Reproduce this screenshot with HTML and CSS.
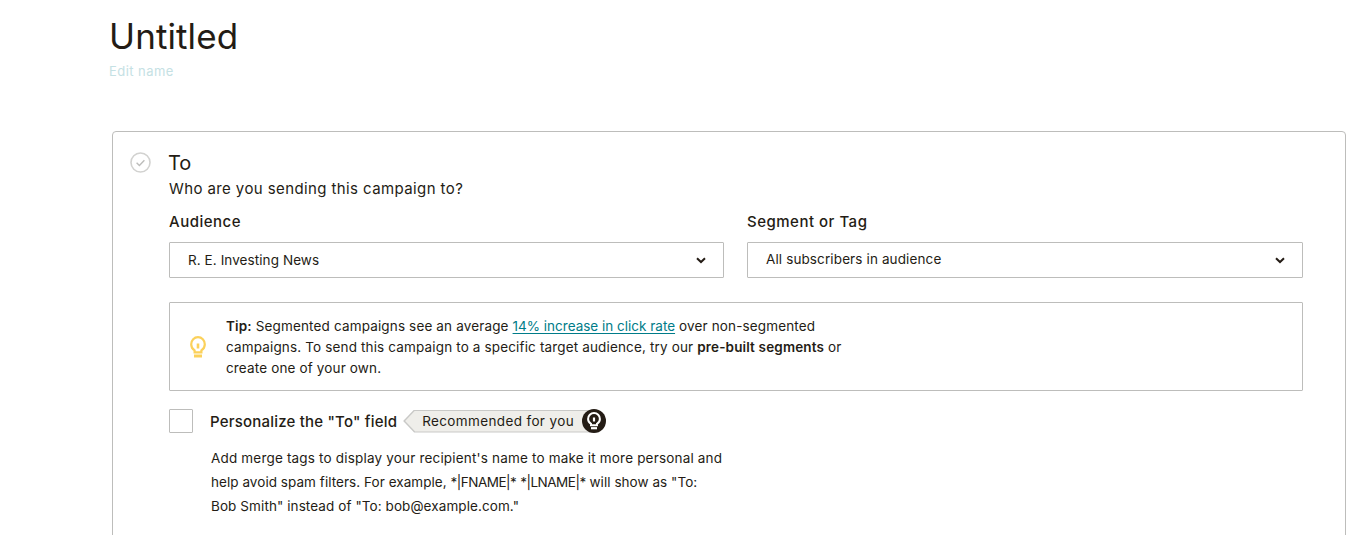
FILE: index.html
```html
<!DOCTYPE html>
<html lang="en">
<head>
<meta charset="utf-8">
<title>Untitled</title>
<link rel="stylesheet" href="styles.css">
</head>
<body>
<main class="page">
  <header class="head">
    <h1 class="title">Untitled</h1>
    <a class="edit">Edit name</a>
  </header>
  <section class="card">
    <svg class="status" width="21" height="21" viewBox="0 0 21 21" fill="none">
      <circle cx="10.5" cy="10.5" r="9.5" stroke="#d2d2d0" stroke-width="1.6"/>
      <path d="M6.6 10.8l2.8 2.8 5-5.4" stroke="#bdbdbb" stroke-width="1.4"/>
    </svg>
    <div class="body">
      <h2 class="heading">To</h2>
      <p class="sub">Who are you sending this campaign to?</p>
      <div class="fields">
        <div class="field field-first">
          <label class="label">Audience</label>
          <div class="select">
            <span class="value">R. E. Investing News</span>
            <svg class="chev" width="10" height="7" viewBox="0 0 10 7" fill="none"><path d="M1 1.2l4 3.8 4-3.8" stroke="#241c15" stroke-width="2"/></svg>
          </div>
        </div>
        <div class="field">
          <label class="label">Segment or Tag</label>
          <div class="select select-alt">
            <span class="value">All subscribers in audience</span>
            <svg class="chev" width="10" height="7" viewBox="0 0 10 7" fill="none"><path d="M1 1.2l4 3.8 4-3.8" stroke="#241c15" stroke-width="2"/></svg>
          </div>
        </div>
      </div>
      <div class="tip">
        <svg class="bulb" width="16" height="22" viewBox="0 0 16 22" fill="none">
          <path d="M4.6 14.4C2.5 13.1 1.2 11 1.2 8.2 1.2 4.4 4.2 1.2 8 1.2s6.8 3.2 6.8 7c0 2.8-1.3 4.9-3.4 6.2v2H4.6z" stroke="#fbd15b" stroke-width="2.2"/>
          <path d="M8 7.5v5" stroke="#fbd15b" stroke-width="2.6"/>
          <path d="M4 20h8" stroke="#fbd15b" stroke-width="3"/>
        </svg>
        <p class="tip-text"><strong class="semi">Tip:</strong> Segmented campaigns see an average <a class="link">14% increase in click rate</a> over non-segmented campaigns. To send this campaign to a specific target audience, try our <strong class="semi">pre-built segments</strong> or create one of your own.</p>
      </div>
      <div class="personalize">
        <span class="checkbox"></span>
        <span class="check-label">Personalize the "To" field</span>
        <span class="badge">
          <span class="badge-text">Recommended for you</span>
          <span class="badge-icon">
            <svg width="14" height="18" viewBox="0 0 14 18" fill="none">
              <path d="M4 11.8C2.2 10.7 1.1 9 1.1 6.9 1.1 3.7 3.7 1.1 7 1.1s5.9 2.6 5.9 5.8c0 2.1-1.1 3.8-2.9 4.9v1.4H4z" stroke="#fff" stroke-width="2"/>
              <path d="M7 5.5v4" stroke="#fff" stroke-width="2.2"/>
              <path d="M4 16.2h6" stroke="#fff" stroke-width="2.2"/>
            </svg>
          </span>
        </span>
      </div>
      <p class="help">
        <span class="line">Add merge tags to display your recipient's name to make it more personal and</span>
        <span class="line line-two">help avoid spam filters. For example, <span class="merge">*|FNAME|*</span> <span class="merge">*|LNAME|*</span> will show as "To:</span>
        <span class="line line-three">Bob Smith" instead of "To: bob@example.com."</span>
      </p>
    </div>
  </section>
</main>
</body>
</html>
```
FILE: styles.css
```css
* { box-sizing: border-box; }
html, body { margin: 0; height: 100%; overflow: hidden; background: #fff; }
body { font-family: Inter, "Liberation Sans", sans-serif; color: #241c15; }
.page { height: 535px; overflow: hidden; padding-left: 109px; padding-right: 14px; }
.head { height: 131px; padding-top: 15px; }
.title { margin: 0; font-size: 35px; line-height: 42px; font-weight: 400; letter-spacing: 0.1px; }
.edit { display: block; margin-top: 5px; font-size: 13px; line-height: 18px; letter-spacing: 0.45px; color: #c5e1e4; }
.card { margin-left: 3px; display: flex; align-items: flex-start; gap: 18px; border: 1px solid #bdbdbb; border-radius: 4px; padding: 20px 42px 40px 17px; }
.status { flex: none; }
.body { flex: 1; min-width: 0; }
.heading { margin: -1px 0 0 -1px; font-size: 20px; line-height: 24px; font-weight: 400; }
.sub { margin: 3px 0 0; font-size: 15px; line-height: 22px; letter-spacing: 0.4px; }
.fields { display: flex; gap: 23px; margin-top: 12px; }
.field { flex: 1; min-width: 0; }
.field-first { flex: none; width: 555px; }
.label { display: block; font-size: 15px; line-height: 20px; font-weight: 500; letter-spacing: 0.5px; }
.select { margin-top: 10px; height: 36px; display: flex; align-items: center; justify-content: space-between; border: 1px solid #bdbdbb; border-radius: 1px; padding: 0 17px 0 18px; font-size: 13.5px; letter-spacing: 0.08px; }
.select-alt .value { margin-top: -2px; letter-spacing: 0.12px; }
.tip { margin-top: 24px; height: 89px; display: flex; align-items: center; gap: 20px; border: 1px solid #bdbdbb; border-radius: 1px; padding-left: 20px; }
.bulb { flex: none; }
.tip-text { margin: 2px 0 0; width: 630px; font-size: 13.5px; line-height: 21px; letter-spacing: 0.15px; }
.semi { font-weight: 600; }
.link { color: #007c89; letter-spacing: 0; text-decoration: underline; text-underline-offset: 2px; }
.personalize { margin-top: 18px; display: flex; align-items: center; height: 24px; }
.checkbox { width: 24px; height: 24px; border: 1px solid #bdbdbb; border-radius: 1px; }
.check-label { margin-left: 17px; font-size: 15px; font-weight: 500; letter-spacing: 0.2px; }
.badge { margin-left: 6px; display: flex; align-items: center; height: 24px; }
.badge-text { position: relative; height: 23px; display: flex; align-items: center; background: #c9c9c7; padding: 0 20px 0 19px; font-size: 13.5px; letter-spacing: 0.37px; clip-path: polygon(0 50%, 11px 0, 100% 0, 100% 100%, 11px 100%); }
.badge-text::before { content: ""; position: absolute; inset: 1px 0 1px 2px; z-index: -1; background: #efeeea; clip-path: polygon(0 50%, 10px 0, 100% 0, 100% 100%, 10px 100%); }
.badge-icon { position: relative; margin-left: -12px; width: 24px; height: 24px; border-radius: 50%; background: #241c15; display: flex; align-items: center; justify-content: center; }
.help { margin: 13px 0 0 42px; font-size: 13.5px; line-height: 24px; letter-spacing: 0.18px; }
.line { display: block; white-space: nowrap; }
.line-two { letter-spacing: 0.05px; }
.line-three { letter-spacing: 0.09px; }
.merge { letter-spacing: -0.5px; }
```
